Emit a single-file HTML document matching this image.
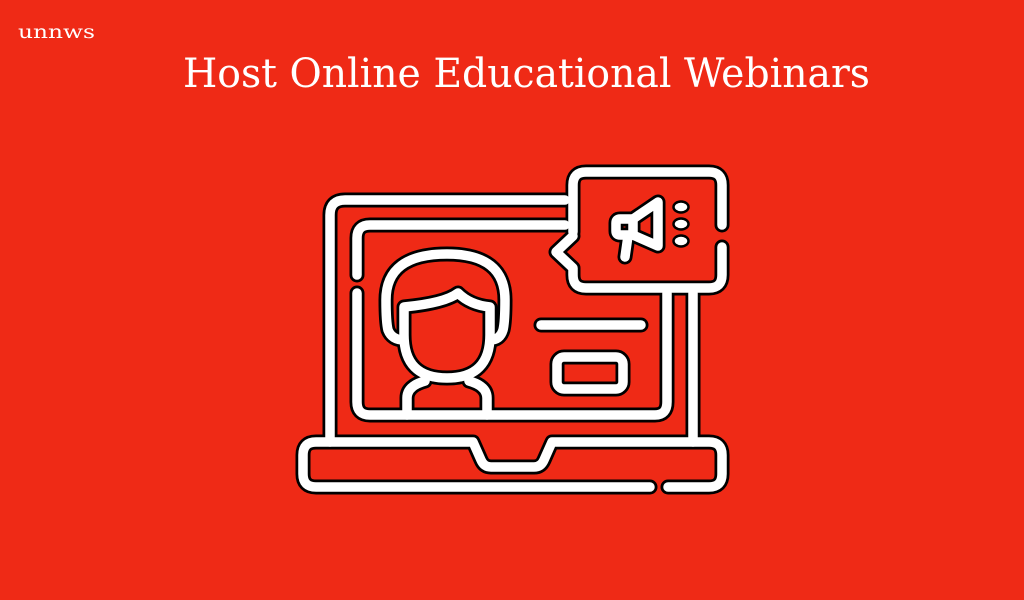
<!DOCTYPE html>
<html><head><meta charset="utf-8"><style>
html,body{margin:0;padding:0;background:#EF2A16;}
body{width:1024px;height:600px;overflow:hidden;position:relative;}
</style></head><body>
<svg width="1024" height="600" viewBox="0 0 1024 600" xmlns="http://www.w3.org/2000/svg" style="position:absolute;left:0;top:0">
<rect width="1024" height="600" fill="#EF2A16"/>
<text x="18" y="38" font-family="DejaVu Serif, serif" font-size="19" fill="#fff" textLength="77" lengthAdjust="spacingAndGlyphs">unnws</text>
<text x="183" y="87" font-family="DejaVu Serif, serif" font-size="40" fill="#fff" textLength="687" lengthAdjust="spacingAndGlyphs">Host Online Educational Webinars</text>
<defs>
<g id="ic">
<path d="M565 200 H345 Q330 200 330 215 V442"/>
<path d="M693 293 V442"/>
<path d="M565 225 H370 Q357 225 357 238 V275"/>
<path d="M357 293 V402 Q357 415 370 415 H655 Q667 415 667 402 V293"/>
<path d="M573 232 V185 Q573 172 586 172 H709 Q722 172 722 185 V225"/>
<path d="M722 247 V275 Q722 288 709 288 H586 Q573 288 573 275 V268 L556 252 L573 236"/>
<path d="M650 487 H316 Q303 487 303 474 V455 Q303 442 316 442 H473 L481 460 Q484 467 491 467 H534 Q541 467 544 460 L552 442 H709 Q722 442 722 455 V474 Q722 487 709 487 H668"/>
<path d="M404 340 Q392 340 388 330 Q386 322 386 300 Q386 254 447 254 Q505 254 505 300 Q505 322 503 330 Q500 340 490 340"/>
<path d="M404 307 V335 Q404 378 447 378 Q490 378 490 335 V307 Q470 305 458 293 Q445 303 404 307 Z"/>
<path d="M407 415 V398 Q407 386 425 381"/>
<path d="M487 415 V398 Q487 386 469 381"/>
<path d="M541 325 H641"/>
<rect x="557" y="357" width="66" height="32" rx="7"/>
<path d="M620 219 H633 V235 H620 Q616 235 616 231 V223 Q616 219 620 219 Z"/>
<path d="M633 219 L658 202 V246 L633 235"/>
<path d="M628 236 L625 257"/>
</g>
</defs>
<g fill="none" stroke="#000" stroke-width="15" stroke-linecap="round" stroke-linejoin="round"><use href="#ic"/></g>
<g fill="none" stroke="#fff" stroke-width="9.5" stroke-linecap="round" stroke-linejoin="round"><use href="#ic"/></g>
<g fill="#fff" stroke="#000" stroke-width="2.5">
<ellipse cx="681" cy="207" rx="7.5" ry="5.5"/>
<ellipse cx="681" cy="224" rx="7.5" ry="5.5"/>
<ellipse cx="681" cy="241" rx="7.5" ry="5.5"/>
</g>
</svg>
</body></html>
